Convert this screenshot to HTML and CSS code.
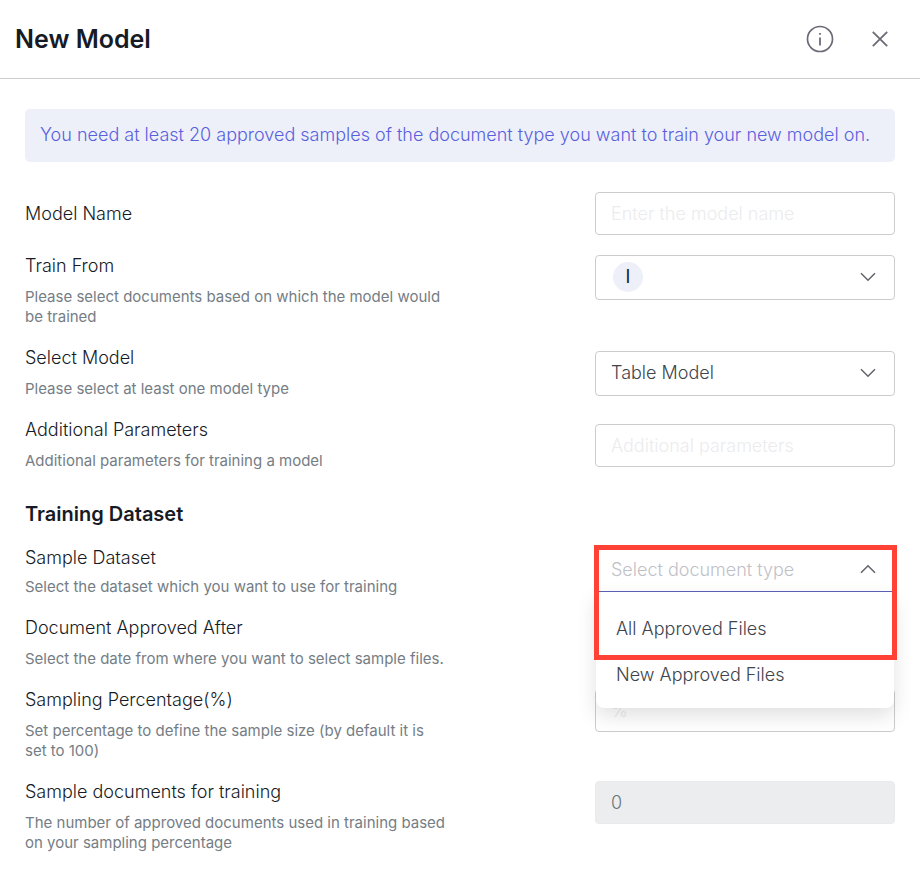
FILE: index.html
```
<!DOCTYPE html>
<html lang="en">
<head>
    <meta charset="UTF-8">
    <meta name="viewport" content="width=device-width, initial-scale=1.0">
    <title>New Model</title>
    <link rel="stylesheet" href="styles.css">
</head>
<body>
    <header class="panel-header">
        <h1>New Model</h1>
        <div class="header-actions">
            <button type="button" class="icon-button" aria-label="Information">
                <svg width="28" height="28" viewBox="0 0 28 28" fill="none" stroke="currentColor">
                    <circle cx="14" cy="14" r="12.5" stroke-width="1.7"/>
                    <path d="M14 12.5V20.5" stroke-width="1.8"/>
                    <path d="M14 8V9.7" stroke-width="1.8"/>
                </svg>
            </button>
            <button type="button" class="icon-button" aria-label="Close">
                <svg width="28" height="28" viewBox="0 0 28 28" fill="none" stroke="currentColor" stroke-width="1.8">
                    <path d="M6.8 6.8L21.2 21.2M21.2 6.8L6.8 21.2"/>
                </svg>
            </button>
        </div>
    </header>

    <main class="panel-body">
        <p class="notice">You need at least 20 approved samples of the document type you want to train your new model on.</p>

        <form class="model-form">
            <div class="form-row centered">
                <div class="form-text">
                    <label for="modelName">Model Name</label>
                </div>
                <div class="control">
                    <input type="text" id="modelName" name="modelName" placeholder="Enter the model name">
                </div>
            </div>

            <div class="form-row">
                <div class="form-text">
                    <label for="trainFrom">Train From</label>
                    <p class="hint">Please select documents based on which the model would be trained</p>
                </div>
                <div class="control">
                    <select id="trainFrom" name="trainFrom">
                        <option value="i" label=" "></option>
                    </select>
                    <span class="chip">I</span>
                    <svg class="chevron" width="16" height="10" viewBox="0 0 16 10"><path d="M1 1.2L8 8.2L15 1.2"/></svg>
                </div>
            </div>

            <div class="form-row centered">
                <div class="form-text">
                    <label for="modelType">Select Model</label>
                    <p class="hint">Please select at least one model type</p>
                </div>
                <div class="control">
                    <select id="modelType" name="modelType">
                        <option>Table Model</option>
                    </select>
                    <svg class="chevron" width="16" height="10" viewBox="0 0 16 10"><path d="M1 1.2L8 8.2L15 1.2"/></svg>
                </div>
            </div>

            <div class="form-row centered">
                <div class="form-text">
                    <label for="parameters">Additional Parameters</label>
                    <p class="hint">Additional parameters for training a model</p>
                </div>
                <div class="control">
                    <input type="text" id="parameters" name="parameters" placeholder="Additional parameters">
                </div>
            </div>

            <h2>Training Dataset</h2>

            <div class="form-row">
                <div class="form-text compact">
                    <label for="dataset">Sample Dataset</label>
                    <p class="hint">Select the dataset which you want to use for training</p>
                </div>
                <div class="control open">
                    <select id="dataset" name="dataset">
                        <option value="">Select document type</option>
                        <option>All Approved Files</option>
                        <option>New Approved Files</option>
                    </select>
                    <svg class="chevron" width="16" height="10" viewBox="0 0 16 10"><path d="M1 8.8L8 1.8L15 8.8"/></svg>
                    <div class="menu">
                        <button type="button">All Approved Files</button>
                        <button type="button">New Approved Files</button>
                    </div>
                    <div class="highlight"></div>
                </div>
            </div>

            <div class="form-row">
                <div class="form-text">
                    <label for="approvedAfter">Document Approved After</label>
                    <p class="hint">Select the date from where you want to select sample files.</p>
                </div>
                <div class="control">
                    <input type="date" id="approvedAfter" name="approvedAfter">
                </div>
            </div>

            <div class="form-row">
                <div class="form-text">
                    <label for="percentage">Sampling Percentage(%)</label>
                    <p class="hint">Set percentage to define the sample size (by default it is set to 100)</p>
                </div>
                <div class="control">
                    <input type="text" id="percentage" name="percentage" placeholder="%">
                </div>
            </div>

            <div class="form-row">
                <div class="form-text">
                    <label for="sampleCount">Sample documents for training</label>
                    <p class="hint">The number of approved documents used in training based on your sampling percentage</p>
                </div>
                <div class="control">
                    <input type="text" id="sampleCount" name="sampleCount" value="0" disabled>
                </div>
            </div>
        </form>
    </main>
</body>
</html>
```
FILE: styles.css
```
* {
    box-sizing: border-box;
}

body {
    font-family: Inter, "Liberation Sans", sans-serif;
    font-size: 18px;
    font-weight: 300;
    line-height: 22px;
    color: #161b26;
    background-color: #fff;
    margin: 0;
}

h1,
h2,
p {
    margin: 0;
}

.panel-header {
    display: flex;
    justify-content: space-between;
    align-items: center;
    padding: 24px 26px 24px 15px;
    border-bottom: 1px solid #ccc;
}

.panel-header h1 {
    font-size: 25px;
    font-weight: 600;
    line-height: 30px;
}

.header-actions {
    display: flex;
    gap: 32px;
}

.icon-button {
    display: flex;
    padding: 0;
    border: none;
    background: none;
    color: #6b6b76;
    cursor: pointer;
}

.panel-body {
    padding: 30px 25px 24px;
}

.notice {
    padding: 15px 15px 16px;
    margin-bottom: 30px;
    border-radius: 5px;
    background-color: #edf0f9;
    color: #5a5fdf;
}

.model-form {
    display: flex;
    flex-direction: column;
    gap: 20px;
}

.model-form h2 {
    padding-top: 10px;
    font-size: 20px;
    font-weight: 600;
    line-height: 26px;
}

.form-row {
    display: flex;
    justify-content: space-between;
    align-items: flex-start;
}

.form-row.centered {
    align-items: center;
}

.form-text {
    display: flex;
    flex-direction: column;
    gap: 10px;
    max-width: 424px;
}

.form-text.compact {
    gap: 8px;
}

.hint {
    font-size: 15px;
    font-weight: 400;
    line-height: 20px;
    color: #757d85;
}

.control {
    position: relative;
    width: 300px;
}

.control input,
.control select {
    display: block;
    width: 100%;
    height: 43px;
    padding: 0 15px;
    border: 1px solid #ccc;
    border-radius: 4px;
    background-color: #fff;
    font: inherit;
    color: #40444d;
}

.control select {
    height: 45px;
    appearance: none;
}

.control input::placeholder {
    color: #ececee;
    opacity: 1;
}

.control input:disabled {
    border-color: #e8eaec;
    background-color: #ecedef;
    color: #6c757d;
}

.chevron {
    position: absolute;
    top: 17px;
    right: 19px;
    fill: none;
    stroke: #66666e;
    stroke-width: 1.6;
    pointer-events: none;
}

.chip {
    position: absolute;
    top: 7px;
    left: 18px;
    width: 30px;
    border-radius: 50%;
    background-color: #edf0f9;
    font-weight: 400;
    line-height: 30px;
    text-align: center;
    pointer-events: none;
}

.control.open {
    z-index: 1;
}

.control.open select {
    border-color: #5d60b5;
    border-radius: 4px 4px 0 0;
    color: #bfc1c7;
}

.menu {
    position: absolute;
    top: 100%;
    left: 1px;
    right: 1px;
    padding: 14px 0 10px;
    border-radius: 0 0 8px 8px;
    background-color: #fff;
    box-shadow: 0 8px 20px rgba(0, 0, 0, 0.12);
}

.menu button {
    display: block;
    width: 100%;
    padding: 12px 20px;
    border: none;
    background: none;
    font: inherit;
    color: #40444d;
    text-align: left;
    cursor: pointer;
}

/* red frame round the field and its first option */
.highlight {
    position: absolute;
    top: -2px;
    left: -1px;
    right: -2px;
    height: 115px;
    border: 5px solid #ff4136;
    pointer-events: none;
}
```
